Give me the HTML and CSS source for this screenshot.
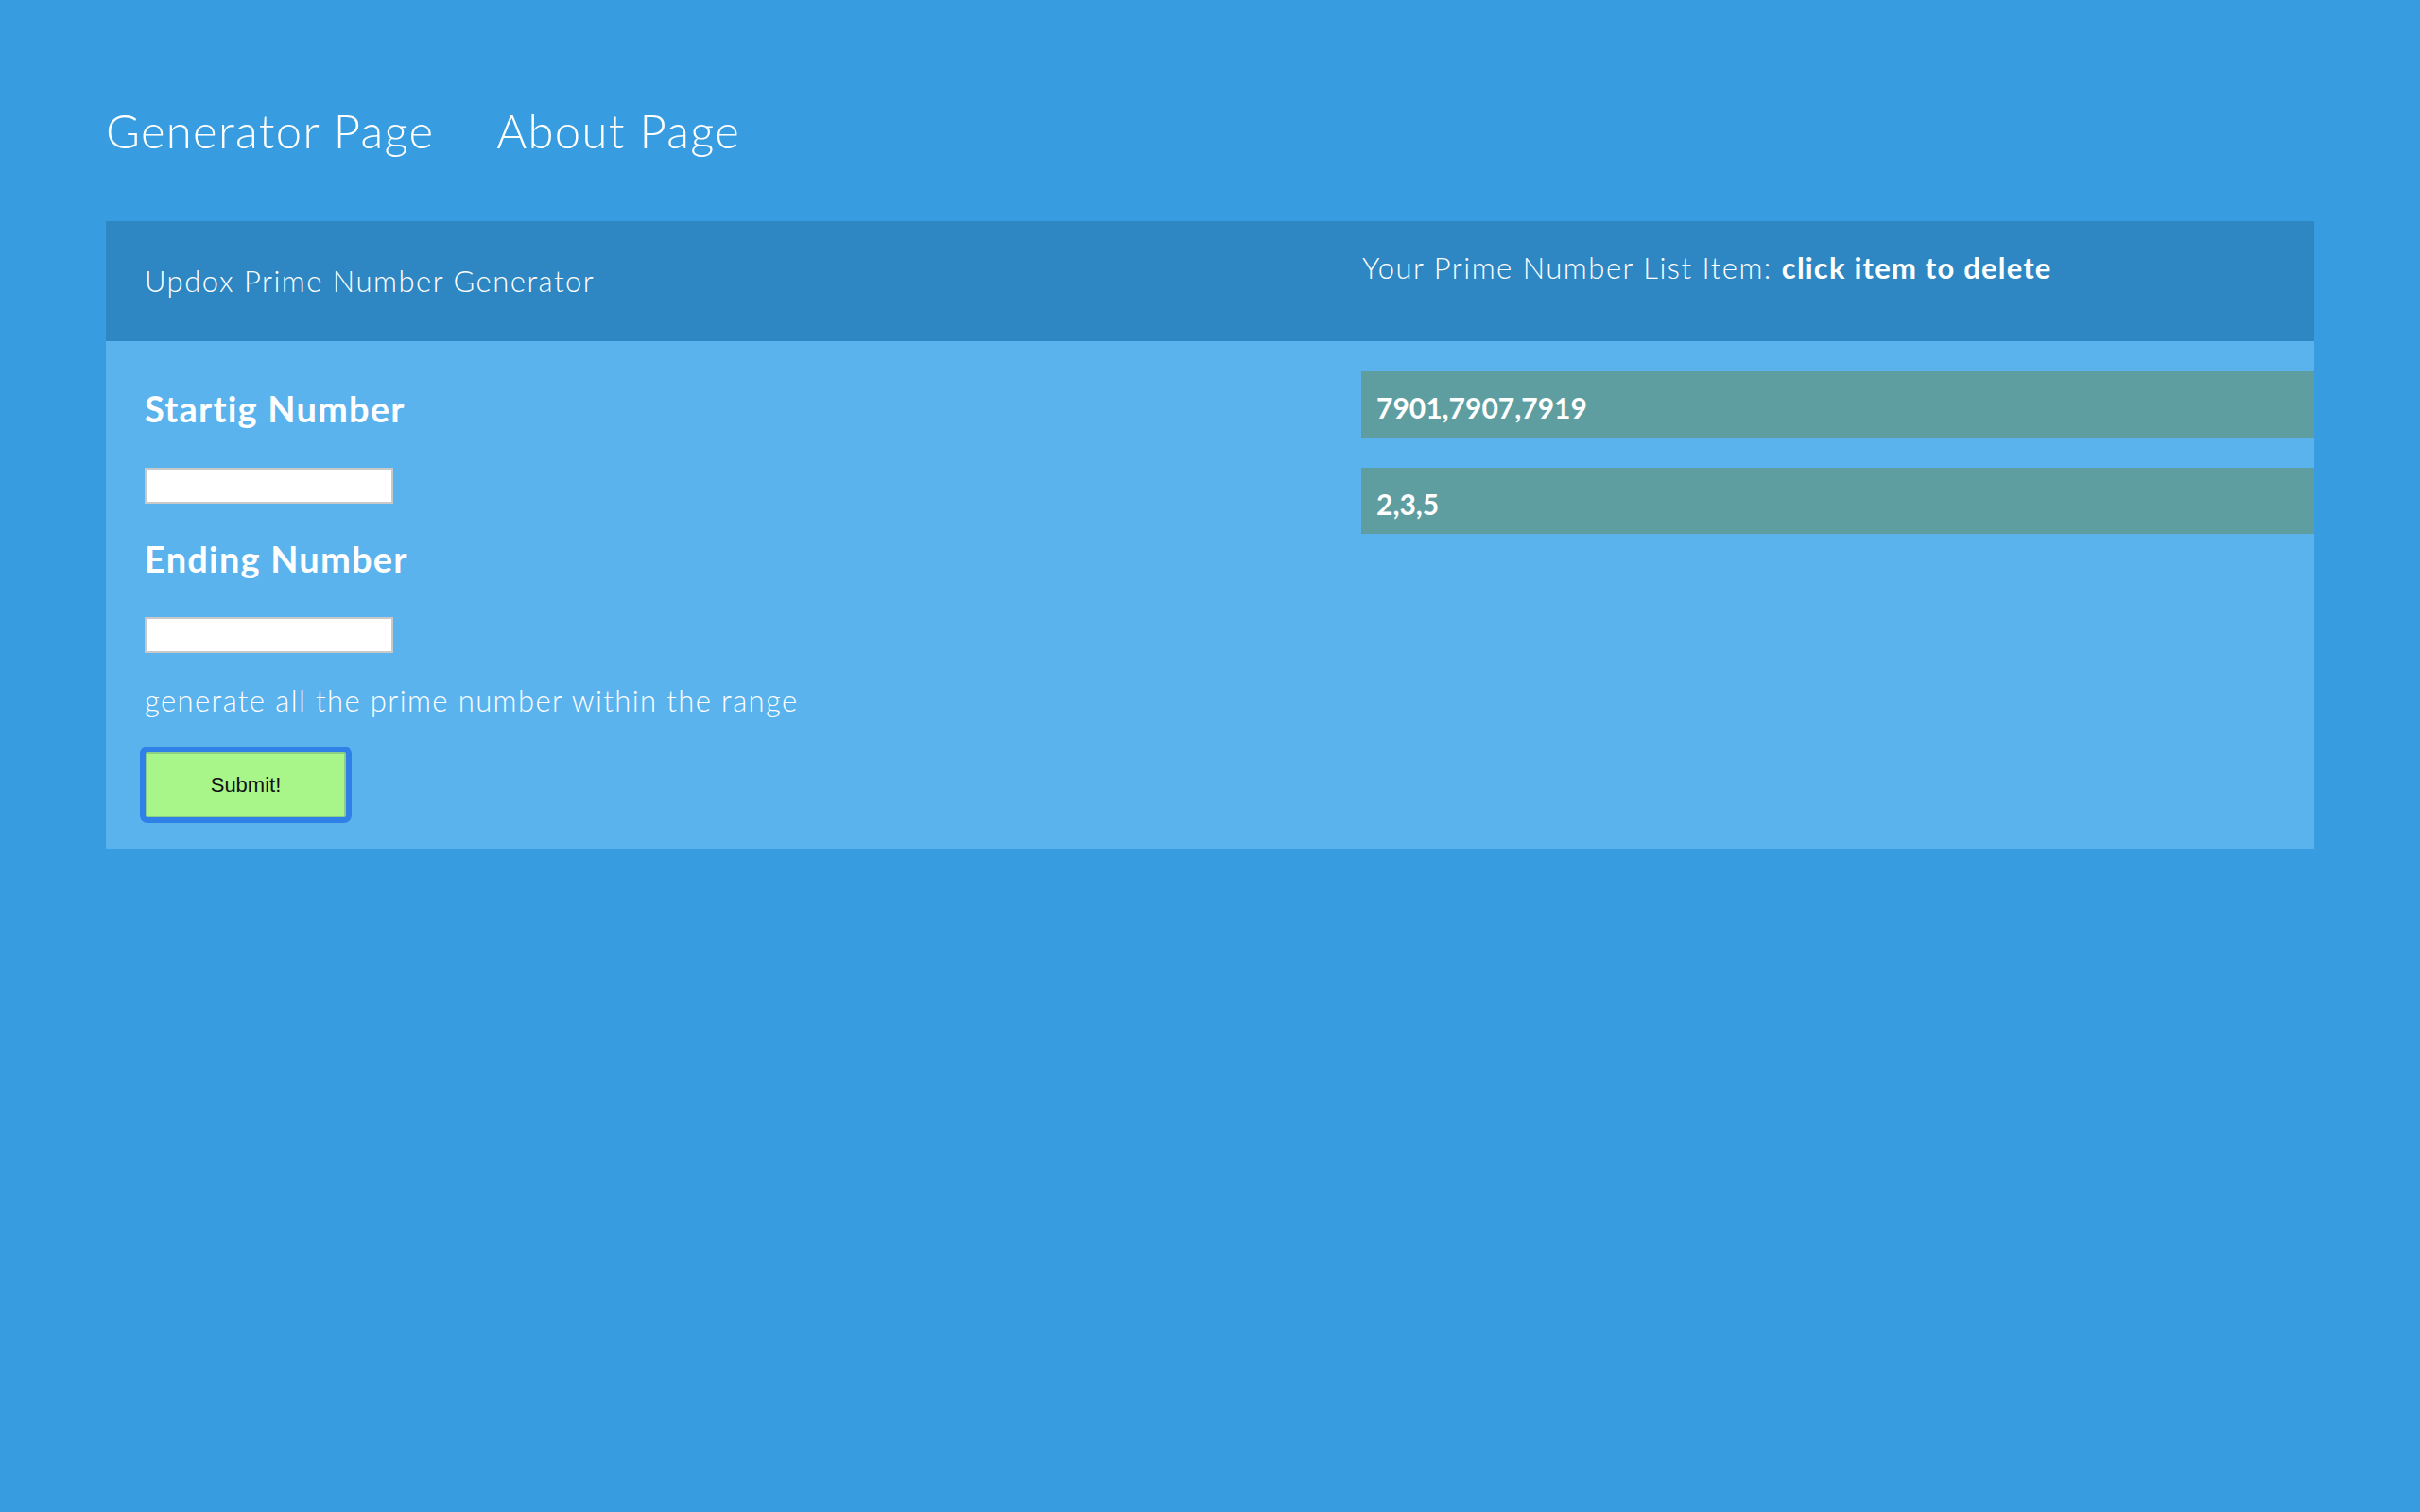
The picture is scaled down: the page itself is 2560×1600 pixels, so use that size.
FILE: index.html
```html
<!DOCTYPE html>
<html>
<head>
<meta charset="utf-8">
<title>Updox Prime Number Generator</title>
<link rel="stylesheet" href="styles.css">
</head>
<body>
<nav class="nav">
  <a class="nav-link" href="#">Generator Page</a>
  <a class="nav-link" href="#">About Page</a>
</nav>
<main class="panel">
  <header class="panel-head">
    <div class="head-left">Updox Prime Number Generator</div>
    <div class="head-right">Your Prime Number List Item: <strong>click item to delete</strong></div>
  </header>
  <section class="panel-body">
    <form class="form">
      <h3 class="label">Startig Number</h3>
      <input class="field" type="text">
      <h3 class="label label-second">Ending Number</h3>
      <input class="field" type="text">
      <p class="hint">generate all the prime number within the range</p>
      <button class="submit" type="button">Submit!</button>
    </form>
    <ul class="list">
      <li class="item">7901,7907,7919</li>
      <li class="item">2,3,5</li>
    </ul>
  </section>
</main>
</body>
</html>
```
FILE: styles.css
```css
html, body {
  margin: 0;
  padding: 0;
}
body {
  background: #379de0;
  font-family: Lato, "Open Sans", sans-serif;
  color: #fff;
  min-height: 1600px;
}
.nav {
  display: flex;
  gap: 66px;
  padding: 114px 112px 72px;
}
.nav-link {
  color: #fff;
  text-decoration: none;
  font-size: 49px;
  line-height: 48px;
  font-weight: 300;
  letter-spacing: 1.3px;
}
.panel {
  margin: 0 112px;
}
.panel-head {
  display: grid;
  grid-template-columns: 1328px 1fr;
  height: 127px;
  background: #2e87c2;
  font-size: 31px;
  line-height: 36px;
  font-weight: 300;
  letter-spacing: 1.5px;
}
.head-left {
  padding: 45px 0 0 41px;
}
.head-right {
  padding: 31px 0 0 1px;
}
.head-right strong {
  font-weight: 700;
  letter-spacing: 1.2px;
}
.panel-body {
  display: grid;
  grid-template-columns: 1328px 1fr;
  background: #5bb3ed;
}
.form {
  display: flex;
  flex-direction: column;
  align-items: flex-start;
  padding: 48px 0 33px 41px;
}
.label {
  margin: 0 0 40px;
  font-size: 38px;
  line-height: 46px;
  font-weight: 700;
  letter-spacing: 1.2px;
}
.label-second {
  margin-top: 35px;
  margin-bottom: 39px;
}
.field {
  box-sizing: border-box;
  width: 263px;
  height: 38px;
  margin: 0;
  border: 2px solid #c9c9c9;
  background: #fff;
  padding: 0 6px;
}
.hint {
  margin: 32px 0 37px;
  font-size: 31px;
  line-height: 36px;
  font-weight: 300;
  letter-spacing: 1.4px;
}
.submit {
  position: relative;
  box-sizing: border-box;
  width: 212px;
  height: 69px;
  margin: 0 0 0 1px;
  background: #a8f58a;
  border: 2px solid #8ccf86;
  font-family: "Liberation Sans", Arial, sans-serif;
  font-size: 22px;
  color: #111;
}
.submit::after {
  content: "";
  position: absolute;
  inset: -8px;
  border: 6px solid #2f80e7;
  border-radius: 8px;
}
.list {
  list-style: none;
  margin: 0;
  padding: 32px 0 0;
  display: flex;
  flex-direction: column;
  gap: 32px;
}
.item {
  height: 70px;
  box-sizing: border-box;
  padding: 20px 0 0 16px;
  background: #5f9ea0;
  font-size: 30px;
  line-height: 36px;
  font-weight: 700;
}
```
